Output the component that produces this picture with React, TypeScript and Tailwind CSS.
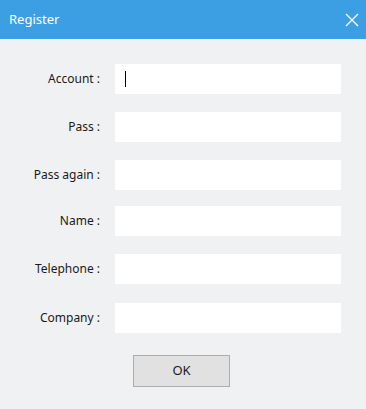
import { type FC } from 'react';

// label + top gap (the original dialog's rows aren't evenly spaced)
const FIELDS: { label: string; gap: string }[] = [
  { label: 'Account :', gap: 'mt-[25px]' },
  { label: 'Pass :', gap: 'mt-[18px]' },
  { label: 'Pass again :', gap: 'mt-[18px]' },
  { label: 'Name :', gap: 'mt-[16px]' },
  { label: 'Telephone :', gap: 'mt-[18px]' },
  { label: 'Company :', gap: 'mt-[19px]' },
];

/** One label + text box row */
const FieldRow: FC<{ label: string; gap: string; focused?: boolean }> = ({ label, gap, focused }) => (
  <div className={`flex h-[30px] items-center ${gap}`}>
    <div className="w-[101px] pr-[1px] text-right text-[12px] text-[#1a1a1a]">{label}</div>
    <div className="ml-[14px] flex h-[30px] w-[226px] items-center bg-white">
      {focused && <div className="ml-[10px] h-[16px] w-px bg-black" />}
    </div>
  </div>
);

export default function App() {
  return (
    <div
      className="flex h-[409px] w-[366px] flex-col bg-[#f0f1f3]"
      style={{ fontFamily: '"Noto Sans", "Open Sans", sans-serif' }}
    >
      <div className="flex h-[39px] items-center justify-between bg-[#3d9fe3] pl-[9px] pr-[6px]">
        <span className="text-[13px] text-white">Register</span>
        <svg width="14" height="14" viewBox="0 0 14 14" className="mr-[1px]">
          <path d="M1 1L13 13M13 1L1 13" stroke="white" strokeWidth="1.3" />
        </svg>
      </div>
      <div className="flex flex-col">
        {FIELDS.map((f, i) => (
          <FieldRow key={f.label} label={f.label} gap={f.gap} focused={i === 0} />
        ))}
      </div>
      <div className="pl-[133px] pt-[22px]">
        <button className="h-[32px] w-[97px] border border-[#adadad] bg-[#e1e1e1] text-[13px] text-[#1a1a1a]">
          OK
        </button>
      </div>
    </div>
  );
}
